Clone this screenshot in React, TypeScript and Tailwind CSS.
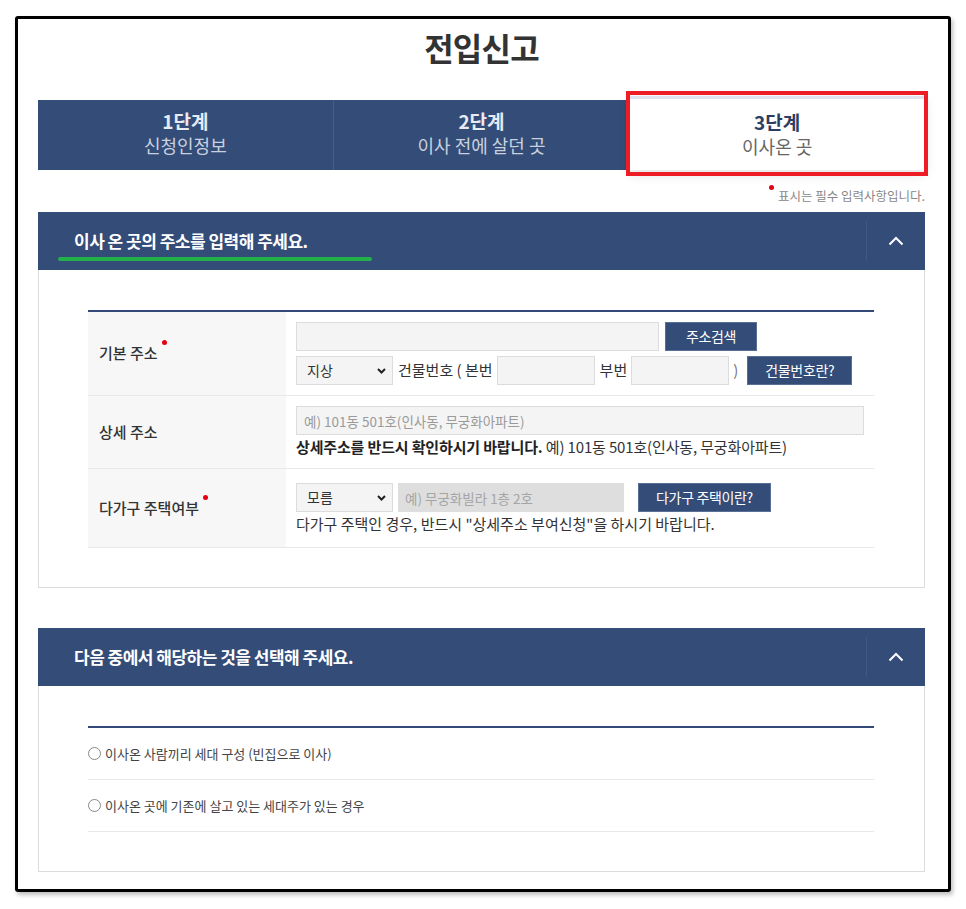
import React from 'react'

const font = { fontFamily: "'Noto Sans CJK KR', 'Noto Sans', sans-serif" }

const ChevronUp = () => (
    <svg width="16" height="10" viewBox="0 0 16 10">
        <path d="M1.5 8.5 L8 2 L14.5 8.5" fill="none" stroke="white" strokeWidth="2" />
    </svg>
)

const FakeSelect = ({ value }: { value: string }) => (
    <div className="w-[97px] h-[29px] shrink-0 flex items-center justify-between pl-[10px] pr-[6px] bg-[#f4f4f4] border border-[#dcdcdc] text-[14px] text-[#333]">
        <span>{value}</span>
        <svg width="9" height="6" viewBox="0 0 9 6">
            <path d="M1 1 L4.5 4.5 L8 1" fill="none" stroke="#222" strokeWidth="2" />
        </svg>
    </div>
)

const NavyButton = ({ label, className }: { label: string; className: string }) => (
    <button className={`h-[29px] shrink-0 bg-[#344c78] border border-[#5a6f96] text-white text-[14px] tracking-tight ${className}`}>
        {label}
    </button>
)

const Label = ({ text, required }: { text: string; required?: boolean }) => (
    <div className="w-[198px] shrink-0 bg-[#f7f7f7] flex items-center pl-[11px] font-medium text-[15px]">
        <span className="relative">
            {text}
            {required && <span className="absolute -right-[9px] -top-[2px] w-[5px] h-[5px] rounded-full bg-[#e60012]" />}
        </span>
    </div>
)

const SectionHeader = ({ title, underline }: { title: string; underline?: boolean }) => (
    <div className="relative h-[58px] bg-[#344c78] flex items-center">
        <div className="flex-1 pl-[36px] text-white text-[17px] font-bold tracking-[-0.03em]">{title}</div>
        <div className="w-px h-[40px] bg-[#3f5884]" />
        <div className="w-[58px] flex justify-center">
            <ChevronUp />
        </div>
        {underline && (
            <div className="absolute left-[20px] top-[45px] w-[314px] h-[4px] rounded-full bg-[#22b04b]" />
        )}
    </div>
)

export default function App() {
    return (
        <div className="w-[966px] h-[909px] bg-white pt-[16px] pl-[15px]" style={font}>
            <div className="w-[936px] h-[876px] border-[3px] border-black rounded-[3px] shadow-[2px_3px_4px_rgba(0,0,0,0.25)] pl-[20px] pr-[23px] pt-[8px]">
                {/* title */}
                <h1 className="text-center text-[32px] leading-[40px] font-bold text-[#333] tracking-tight">전입신고</h1>

                {/* steps */}
                <div className="grid grid-cols-3 mt-[33px] h-[70px]">
                    <div className="bg-[#344c78] border-r border-[#4a5f87] flex flex-col items-center justify-center pb-[4px]">
                        <span className="text-[19px] leading-[24px] font-bold text-[#e6eaf2]">1단계</span>
                        <span className="text-[18px] leading-[24px] text-[#c9d1df]">신청인정보</span>
                    </div>
                    <div className="bg-[#344c78] flex flex-col items-center justify-center pb-[4px]">
                        <span className="text-[19px] leading-[24px] font-bold text-[#e6eaf2]">2단계</span>
                        <span className="text-[18px] leading-[24px] text-[#c9d1df]">이사 전에 살던 곳</span>
                    </div>
                    <div className="relative -mt-[4px] bg-white border-t-[3px] border-[#dfe2ec] shadow-[0_4px_12px_rgba(0,0,0,0.12)] flex flex-col items-center justify-center pb-[2px]">
                        <span className="text-[19px] leading-[24px] font-bold text-[#2c3e62]">3단계</span>
                        <span className="text-[18px] leading-[24px] text-[#666]">이사온 곳</span>
                        <div className="absolute -top-[8px] -bottom-[6px] -left-[3px] -right-[3px] border-[4px] border-[#ee1c25]" />
                    </div>
                </div>

                {/* required note */}
                <div className="mt-[18px] flex justify-end items-start text-[12.5px] leading-[16px] text-[#888]">
                    <span className="inline-block w-[5px] h-[5px] rounded-full bg-[#e60012] mt-[-3px] mr-[4px]" />
                    <span>표시는 필수 입력사항입니다.</span>
                </div>

                {/* section 1 */}
                <div className="mt-[8px]">
                    <SectionHeader title="이사 온 곳의 주소를 입력해 주세요." underline />
                    <div className="border border-t-0 border-[#dcdcdc] pt-[40px] pb-[39px] pl-[49px] pr-[50px]">
                        <div className="border-t-2 border-[#34497a] text-[15px] text-[#333]">
                            {/* row 1 */}
                            <div className="flex border-b border-[#e8e8e8]">
                                <Label text="기본 주소" required />
                                <div className="flex-1 pl-[10px] pt-[10px] pb-[10px] flex flex-col gap-[5px]">
                                    <div className="flex gap-[6px]">
                                        <input className="w-[363px] h-[29px] bg-[#f4f4f4] border border-[#dcdcdc]" />
                                        <NavyButton label="주소검색" className="w-[92px]" />
                                    </div>
                                    <div className="flex items-center gap-[4px]">
                                        <FakeSelect value="지상" />
                                        <span className="whitespace-nowrap ml-[1px]">건물번호 ( 본번</span>
                                        <input className="w-[98px] h-[29px] bg-[#f4f4f4] border border-[#dcdcdc]" />
                                        <span className="ml-[1px]">부번</span>
                                        <input className="w-[98px] h-[29px] bg-[#f4f4f4] border border-[#dcdcdc]" />
                                        <span className="text-[#777]">)</span>
                                        <NavyButton label="건물번호란?" className="w-[105px] ml-[5px]" />
                                    </div>
                                </div>
                            </div>

                            {/* row 2 */}
                            <div className="flex border-b border-[#e8e8e8]">
                                <Label text="상세 주소" />
                                <div className="flex-1 pl-[10px] pt-[10px] pb-[11px] flex flex-col">
                                    <input
                                        className="w-[568px] h-[29px] bg-[#f4f4f4] border border-[#dcdcdc] pl-[7px] text-[13.5px] placeholder:text-[#9a9a9a]"
                                        placeholder="예) 101동 501호(인사동, 무궁화아파트)"
                                    />
                                    <div className="leading-[21px] mt-[1px] tracking-[-0.01em]">
                                        <span className="font-bold text-[#222]">상세주소를 반드시 확인하시기 바랍니다.</span>
                                        <span> 예) 101동 501호(인사동, 무궁화아파트)</span>
                                    </div>
                                </div>
                            </div>

                            {/* row 3 */}
                            <div className="flex border-b border-[#e8e8e8]">
                                <Label text="다가구 주택여부" required />
                                <div className="flex-1 pl-[10px] pt-[14px] pb-[13px] flex flex-col">
                                    <div className="flex items-center">
                                        <FakeSelect value="모름" />
                                        <input
                                            disabled
                                            className="w-[226px] h-[29px] ml-[5px] bg-[#dedede] pl-[7px] text-[13.5px] placeholder:text-[#a5a5a5]"
                                            placeholder="예) 무궁화빌라 1층 2호"
                                        />
                                        <NavyButton label="다가구 주택이란?" className="w-[133px] ml-[14px]" />
                                    </div>
                                    <div className="leading-[21px] mt-[1px]">
                                        다가구 주택인 경우, 반드시 "상세주소 부여신청"을 하시기 바랍니다.
                                    </div>
                                </div>
                            </div>
                        </div>
                    </div>
                </div>

                {/* section 2 */}
                <div className="mt-[40px]">
                    <SectionHeader title="다음 중에서 해당하는 것을 선택해 주세요." />
                    <div className="border border-t-0 border-[#dcdcdc] pt-[40px] pb-[39px] pl-[49px] pr-[50px]">
                        <div className="border-t-2 border-[#34497a] text-[13px] text-[#444]">
                            {['이사온 사람끼리 세대 구성 (빈집으로 이사)', '이사온 곳에 기존에 살고 있는 세대주가 있는 경우'].map((label) => (
                                <div key={label} className="h-[52px] flex items-center gap-[4px] border-b border-[#e8e8e8]">
                                    <span className="w-[13px] h-[13px] rounded-full border border-[#888] bg-white" />
                                    <span>{label}</span>
                                </div>
                            ))}
                        </div>
                    </div>
                </div>
            </div>
        </div>
    )
}
